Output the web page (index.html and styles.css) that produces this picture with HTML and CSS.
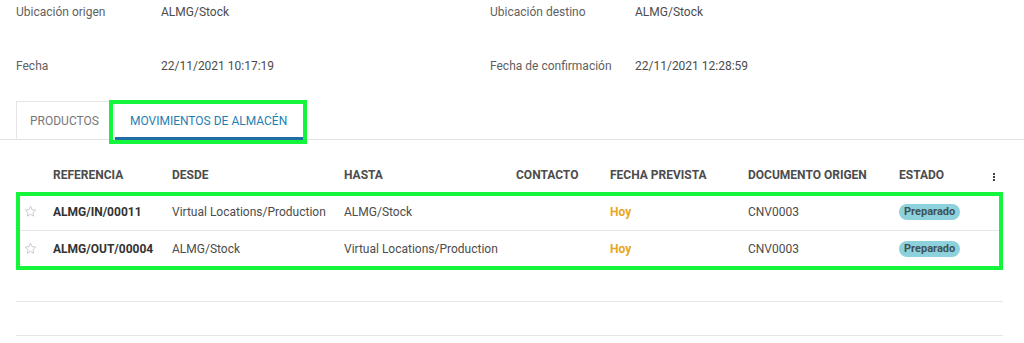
FILE: index.html
```html
<!DOCTYPE html>
<html lang="es">
<head>
<meta charset="utf-8">
<title>Movimientos de almacén</title>
<link rel="stylesheet" href="styles.css">
</head>
<body>
<div class="info">
  <div class="field"><span class="label">Ubicación origen</span><span class="value">ALMG/Stock</span></div>
  <div class="field"><span class="label">Ubicación destino</span><span class="value">ALMG/Stock</span></div>
  <div class="field"><span class="label">Fecha</span><span class="value">22/11/2021 10:17:19</span></div>
  <div class="field"><span class="label">Fecha de confirmación</span><span class="value">22/11/2021 12:28:59</span></div>
</div>

<div class="tabs">
  <div class="tab">PRODUCTOS</div>
  <div class="tab active">MOVIMIENTOS DE ALMACÉN<span class="highlight tab-highlight"></span></div>
</div>

<div class="table-wrap">
  <table class="list">
    <colgroup>
      <col class="c-star"><col class="c-ref"><col class="c-from"><col class="c-to"><col class="c-contact"><col class="c-date"><col class="c-doc"><col class="c-state"><col class="c-menu">
    </colgroup>
    <thead>
      <tr>
        <th></th>
        <th>REFERENCIA</th>
        <th>DESDE</th>
        <th>HASTA</th>
        <th>CONTACTO</th>
        <th>FECHA PREVISTA</th>
        <th>DOCUMENTO ORIGEN</th>
        <th>ESTADO</th>
        <th class="menu"><span class="kebab"><i></i><i></i><i></i></span></th>
      </tr>
    </thead>
    <tbody>
      <tr class="data">
        <td><svg class="star" viewBox="0 0 24 24" width="13" height="13"><path d="M12 2.5l2.9 6.1 6.6.8-4.9 4.6 1.3 6.6L12 17.3l-5.9 3.3 1.3-6.6-4.9-4.6 6.6-.8z" fill="none" stroke="#bcbcbc" stroke-width="1.4" stroke-linejoin="round"/></svg></td>
        <td class="ref">ALMG/IN/00011</td>
        <td>Virtual Locations/Production</td>
        <td>ALMG/Stock</td>
        <td></td>
        <td class="today">Hoy</td>
        <td>CNV0003</td>
        <td><span class="badge">Preparado</span></td>
        <td></td>
      </tr>
      <tr class="data">
        <td><svg class="star" viewBox="0 0 24 24" width="13" height="13"><path d="M12 2.5l2.9 6.1 6.6.8-4.9 4.6 1.3 6.6L12 17.3l-5.9 3.3 1.3-6.6-4.9-4.6 6.6-.8z" fill="none" stroke="#bcbcbc" stroke-width="1.4" stroke-linejoin="round"/></svg></td>
        <td class="ref">ALMG/OUT/00004</td>
        <td>ALMG/Stock</td>
        <td>Virtual Locations/Production</td>
        <td></td>
        <td class="today">Hoy</td>
        <td>CNV0003</td>
        <td><span class="badge">Preparado</span></td>
        <td></td>
      </tr>
      <tr class="empty"><td colspan="9"></td></tr>
      <tr class="empty"><td colspan="9"></td></tr>
    </tbody>
  </table>
  <span class="highlight rows-highlight"></span>
</div>
</body>
</html>
```
FILE: styles.css
```css
* { box-sizing: border-box; }

body {
  margin: 0;
  font-family: Roboto, "Liberation Sans", Arial, sans-serif;
  font-size: 12px;
  color: #4c4c4c;
  background: #fff;
}

.info {
  display: grid;
  grid-template-columns: 474px 474px;
  padding: 0 16px;
}

.field {
  display: flex;
  height: 54px;
  line-height: 24px;
}

.label {
  width: 145px;
  color: #5f5f5f;
}

.value {
  color: #4c4c4c;
}

.tabs {
  display: flex;
  gap: 3px;
  margin-top: -7px;
  padding-left: 16px;
  border-bottom: 1px solid #e2e2e2;
}

.tab {
  position: relative;
  height: 38px;
  line-height: 38px;
  padding: 0 11px 0 13px;
  border: 1px solid #e6e6e6;
  border-bottom: none;
  color: #777;
  font-size: 12px;
}

.tab.active {
  padding: 0 16px 0 15px;
  color: #1f7fb2;
  font-weight: 400;
  box-shadow: inset 0 -3px 0 #1d6ea5;
  margin-bottom: -1px;
  height: 39px;
}

.highlight {
  position: absolute;
  border: 4px solid #14f53b;
  pointer-events: none;
}

.tab-highlight {
  top: -2px;
  left: -6px;
  right: -4px;
  bottom: -4px;
}

.table-wrap {
  position: relative;
  margin: 18px 21px 0 16px;
}

.list {
  width: 100%;
  border-collapse: collapse;
  table-layout: fixed;
}

.c-star { width: 29px; }
.c-ref { width: 119px; }
.c-from { width: 172px; }
.c-to { width: 172px; }
.c-contact { width: 94px; }
.c-date { width: 138px; }
.c-doc { width: 151px; }
.c-state { width: 84px; }
.c-menu { width: 28px; }

.list th {
  height: 35px;
  padding: 0 8px;
  text-align: left;
  font-weight: 700;
  color: #4c4c4c;
  white-space: nowrap;
  border-bottom: 1px solid #e2e2e2;
}

.list td {
  padding: 0 8px;
  white-space: nowrap;
  color: #4c4c4c;
}

.list tr.data td {
  height: 37px;
  border-bottom: 1px solid #e6e6e6;
}

.list tr.empty td {
  height: 34px;
  border-bottom: 1px solid #e6e6e6;
}

.star {
  display: block;
}

.ref {
  font-weight: 700;
  color: #333 !important;
}

.today {
  font-weight: 700;
  color: #e8a623 !important;
}

.badge {
  display: inline-block;
  padding: 1px 5px;
  border-radius: 9px;
  background: #8dd1dc;
  color: #3f5256;
  font-size: 11px;
  font-weight: 700;
  line-height: 14px;
}

.menu {
  padding-left: 10px !important;
}

.kebab {
  display: flex;
  flex-direction: column;
  gap: 1px;
  width: 3px;
  margin-left: 8px;
  margin-top: 4px;
}

.kebab i {
  display: block;
  width: 2px;
  height: 2px;
  background: #444;
}

.rows-highlight {
  top: 34px;
  left: 0;
  right: 0;
  height: 78px;
}
```
